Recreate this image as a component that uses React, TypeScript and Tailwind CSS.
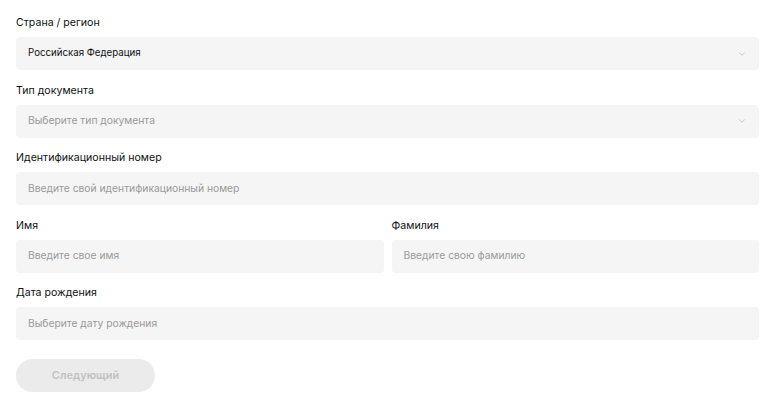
import { ChevronDown } from 'lucide-react';

const Label = ({ children }: { children: string }) => (
  <div className="h-[16px] mb-[6px] flex items-center text-[10.6px] text-[#111]">{children}</div>
);

const Field = ({ placeholder, value, select }: { placeholder: string; value?: string; select?: boolean }) => (
  <div className="h-[33px] rounded-[4px] bg-[#f5f5f5] px-3 flex items-center justify-between">
    {value ? (
      <span className="text-[9.7px] text-[#111]">{value}</span>
    ) : (
      <span className="text-[10.3px] text-[#9a9a9a]">{placeholder}</span>
    )}
    {select && <ChevronDown className="w-[10px] h-[10px] text-[#aaa]" strokeWidth={1.5} />}
  </div>
);

export default function App() {
  return (
    <div className="w-[775px] h-[413px] bg-white px-4 pt-[15px]" style={{ fontFamily: 'Inter, "Noto Sans", sans-serif' }}>
      <div className="flex flex-col gap-[12.5px]">
        <div>
          <Label>Страна / регион</Label>
          <Field placeholder="" value="Российская Федерация" select />
        </div>
        <div>
          <Label>Тип документа</Label>
          <Field placeholder="Выберите тип документа" select />
        </div>
        <div>
          <Label>Идентификационный номер</Label>
          <Field placeholder="Введите свой идентификационный номер" />
        </div>
        <div className="grid grid-cols-2 gap-2">
          <div>
            <Label>Имя</Label>
            <Field placeholder="Введите свое имя" />
          </div>
          <div>
            <Label>Фамилия</Label>
            <Field placeholder="Введите свою фамилию" />
          </div>
        </div>
        <div>
          <Label>Дата рождения</Label>
          <Field placeholder="Выберите дату рождения" />
        </div>
      </div>
      <button className="mt-[19px] w-[139px] h-[33px] rounded-full bg-[#ebebeb] text-[#c2c2c2] text-[11px] font-semibold">
        Следующий
      </button>
    </div>
  );
}
